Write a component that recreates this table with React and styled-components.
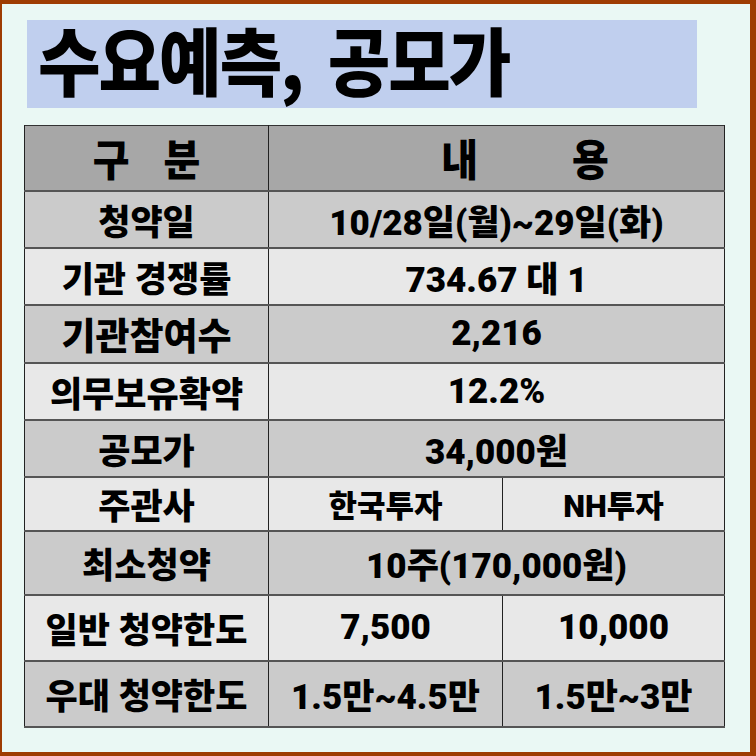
import React from "react";
import styled, { createGlobalStyle } from "styled-components";

const GlobalStyle = createGlobalStyle`
  html, body {
    margin: 0;
    padding: 0;
    background: #9e3c02;
  }
  * { box-sizing: border-box; }
`;

const rows = [
  { label: "청약일", value: "10/28일(월)~29일(화)", tone: "dark", h: 57 },
  { label: "기관 경쟁률", value: "734.67 대 1", tone: "light", h: 57 },
  { label: "기관참여수", value: "2,216", tone: "dark", h: 58, labelSize: 37 },
  { label: "의무보유확약", value: "12.2%", tone: "light", h: 57 },
  { label: "공모가", value: "34,000원", tone: "dark", h: 57 },
  { label: "주관사", split: ["한국투자", "NH투자"], tone: "light", h: 54, size: 31 },
  { label: "최소청약", value: "10주(170,000원)", tone: "dark", h: 64 },
  { label: "일반 청약한도", split: ["7,500", "10,000"], tone: "light", h: 66 },
  { label: "우대 청약한도", split: ["1.5만~4.5만", "1.5만~3만"], tone: "dark", h: 66 },
];

const App = () => {
  return (
    <>
      <GlobalStyle />
      <Frame>
        <Panel>
          <TitleBox>
            <Title>수요예측, 공모가</Title>
          </TitleBox>
          <Table>
            <colgroup>
              <col style={{ width: 244 }} />
              <col style={{ width: 234 }} />
              <col />
            </colgroup>
            <tbody>
              <Row $h={65} $tone="head">
                <HeadCell>
                  <HeadText $gap={34}>
                    <span>구</span>
                    <span>분</span>
                  </HeadText>
                </HeadCell>
                <HeadCell colSpan={2} $shift={57}>
                  <HeadText $gap={94}>
                    <span>내</span>
                    <span>용</span>
                  </HeadText>
                </HeadCell>
              </Row>
              {rows.map((r) => (
                <Row key={r.label} $h={r.h} $tone={r.tone}>
                  <Cell $size={r.labelSize}>{r.label}</Cell>
                  {r.split ? (
                    <>
                      <Cell $size={r.size}>{r.split[0]}</Cell>
                      <Cell $size={r.size}>{r.split[1]}</Cell>
                    </>
                  ) : (
                    <Cell colSpan={2} $size={r.size}>
                      {r.value}
                    </Cell>
                  )}
                </Row>
              ))}
            </tbody>
          </Table>
        </Panel>
      </Frame>
    </>
  );
};

export default App;

const Frame = styled.div`
  width: 756px;
  height: 756px;
  padding: 4px 6px 4px 2px;
  background: #9e3c02;
`;

const Panel = styled.div`
  width: 100%;
  height: 100%;
  background: #eaf8f4;
  padding: 16px 0 0 22px;
`;

const TitleBox = styled.div`
  width: 670px;
  height: 88px;
  margin-left: 3px;
  background: #c0cfee;
  display: flex;
  align-items: center;
  padding-left: 11px;
`;

const Title = styled.h1`
  margin: 0 0 10px;
  font-family: "Noto Sans CJK KR", sans-serif;
  font-weight: 900;
  font-size: 68px;
  line-height: 1;
  letter-spacing: -2px;
  word-spacing: 12px;
  color: #000;
  transform: scaleY(1.08);
  transform-origin: left center;
  white-space: nowrap;
`;

const Table = styled.table`
  margin-top: 17px;
  width: 701px;
  border-collapse: collapse;
  table-layout: fixed;
  border: 1px solid #333;
`;

const toneColor = {
  head: "#a7a7a7",
  dark: "#cbcbcb",
  light: "#e8e8e8",
};

const Row = styled.tr`
  height: ${(p) => p.$h}px;
  background: ${(p) => toneColor[p.$tone]};
  border-bottom: 2px solid #555;
`;

const Cell = styled.td`
  padding: 0;
  text-align: center;
  vertical-align: middle;
  border-left: 1px solid #222;
  border-right: 1px solid #222;
  font-family: "Roboto", "Noto Sans CJK KR", sans-serif;
  font-weight: 900;
  font-size: ${(p) => p.$size || 35}px;
  color: #000;
  white-space: nowrap;
`;

const HeadCell = styled.td`
  padding: 0 0 0 ${(p) => p.$shift || 0}px;
  vertical-align: middle;
  border-left: 1px solid #222;
  border-right: 1px solid #222;
`;

const HeadText = styled.div`
  display: flex;
  justify-content: center;
  gap: ${(p) => p.$gap}px;
  font-family: "Noto Sans CJK KR", sans-serif;
  font-weight: 900;
  font-size: 40px;
  line-height: 1;
  color: #000;
  transform: scaleY(1.08);
`;
